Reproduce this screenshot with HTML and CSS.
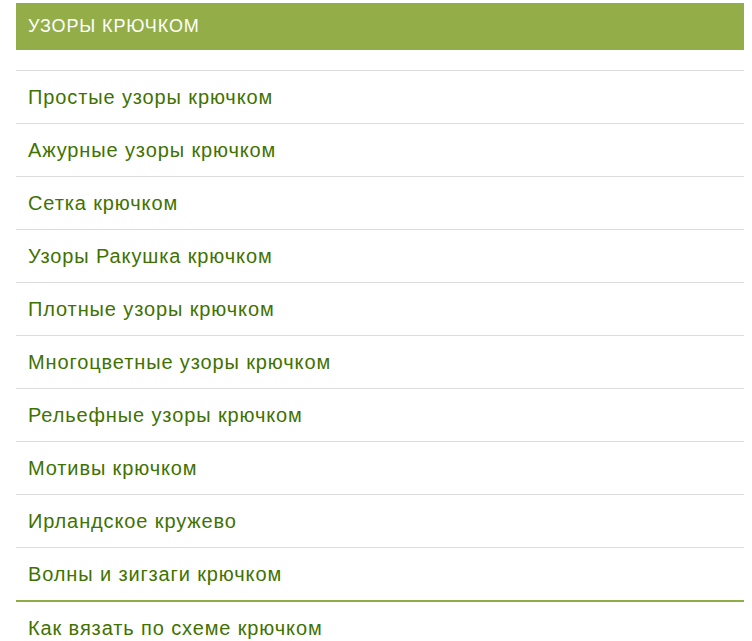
FILE: index.html
```html
<!DOCTYPE html>
<html lang="ru">
<head>
<meta charset="utf-8">
<title>Узоры крючком</title>
<link rel="stylesheet" href="styles.css">
</head>
<body>
<div class="widget">
  <h3 class="widget-title">УЗОРЫ КРЮЧКОМ</h3>
  <ul class="menu">
    <li><a href="#">Простые узоры крючком</a></li>
    <li><a href="#">Ажурные узоры крючком</a></li>
    <li><a href="#">Сетка крючком</a></li>
    <li><a href="#">Узоры Ракушка крючком</a></li>
    <li><a href="#">Плотные узоры крючком</a></li>
    <li><a href="#">Многоцветные узоры крючком</a></li>
    <li><a href="#">Рельефные узоры крючком</a></li>
    <li><a href="#">Мотивы крючком</a></li>
    <li><a href="#">Ирландское кружево</a></li>
    <li><a href="#">Волны и зигзаги крючком</a></li>
    <li class="accent"><a href="#">Как вязать по схеме крючком</a></li>
  </ul>
</div>
</body>
</html>
```
FILE: styles.css
```css
html, body {
  margin: 0;
  padding: 0;
  background: #ffffff;
}
body {
  padding: 3px 8px 0 16px;
  font-family: "Liberation Sans", Arial, sans-serif;
}
.widget {
  width: 728px;
}
.widget-title {
  margin: 0;
  height: 47px;
  box-sizing: border-box;
  padding: 0 12px;
  background: #93ae48;
  color: #ffffff;
  font-size: 18px;
  font-weight: normal;
  letter-spacing: 0.9px;
  line-height: 47px;
}
.menu {
  list-style: none;
  margin: 20px 0 0 0;
  padding: 0;
}
.menu li {
  border-top: 1px solid #dddddd;
  height: 53px;
  box-sizing: border-box;
  display: flex;
  align-items: center;
  padding: 0 12px;
}
.menu li.accent {
  border-top: 2px solid #8fad44;
}
.menu a {
  color: #3f7200;
  text-decoration: none;
  font-size: 20px;
  letter-spacing: 0.88px;
  line-height: 24px;
}
```
